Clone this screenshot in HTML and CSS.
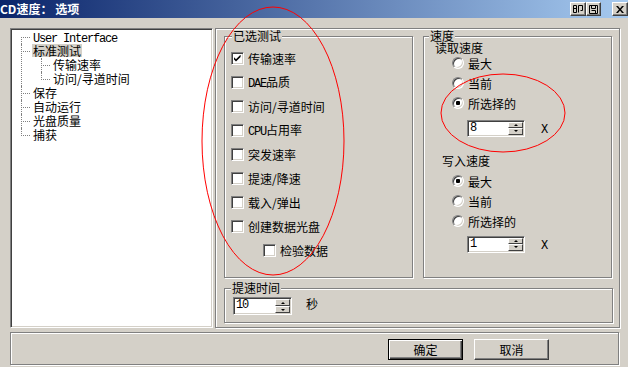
FILE: index.html
```html
<!DOCTYPE html>
<html lang="zh">
<head>
<meta charset="utf-8">
<title>CD速度： 选项</title>
<link rel="stylesheet" href="styles.css">
</head>
<body>
<div class="titlebar">
  <span class="title">CD速度： 选项</span>
  <span class="tbtn tbtn-a"><svg width="10" height="8" viewBox="0 0 10 8"><path d="M0.5 0.5h3v7h-3z M0.5 3.5h3 M5.5 0.5h4v5h-2 M5.5 0.5v7" fill="none" stroke="#000"/></svg></span>
  <span class="tbtn tbtn-b"><svg width="9" height="9" viewBox="0 0 9 9"><path d="M0.5 0.5h8v8h-8z M2.5 0.5v3h4v-3 M2.5 5.5h4v3" fill="none" stroke="#000"/></svg></span>
  <span class="tbtn tbtn-close"><svg width="8" height="7" viewBox="0 0 8 7"><path d="M0 0h2l2 2.5 2-2.5h2l-3 3.5 3 3.5h-2l-2-2.5-2 2.5h-2l3-3.5z" fill="#000"/></svg></span>
</div>

<div class="main">
  <div class="tree">
    <ul class="tree-root">
      <li class="first"><div class="lbl"><span class="lat">User Interface</span></div></li>
      <li><div class="lbl"><span class="sel">标准测试</span></div>
        <ul class="tree-sub">
          <li><div class="lbl">传输速率</div></li>
          <li class="last"><div class="lbl">访问/寻道时间</div></li>
        </ul>
      </li>
      <li><div class="lbl">保存</div></li>
      <li><div class="lbl">自动运行</div></li>
      <li><div class="lbl">光盘质量</div></li>
      <li class="last"><div class="lbl">捕获</div></li>
    </ul>
  </div>

  <div class="panel">
    <div class="toprow">
      <fieldset class="group g-tests">
        <legend>已选测试</legend>
        <div class="tests">
          <div class="crow"><span class="cbox"><svg width="7" height="7" viewBox="0 0 7 7"><path d="M0 2.2l2 2 4.6-4.6v2.4l-4.6 4.6-2-2z" fill="#000"/></svg></span><span>传输速率</span></div>
          <div class="crow"><span class="cbox"></span><span><span class="lat">DAE</span>品质</span></div>
          <div class="crow"><span class="cbox"></span><span>访问/寻道时间</span></div>
          <div class="crow"><span class="cbox"></span><span><span class="lat">CPU</span>占用率</span></div>
          <div class="crow"><span class="cbox"></span><span>突发速率</span></div>
          <div class="crow"><span class="cbox"></span><span>提速/降速</span></div>
          <div class="crow"><span class="cbox"></span><span>载入/弹出</span></div>
          <div class="crow"><span class="cbox"></span><span>创建数据光盘</span></div>
          <div class="crow crow-sub"><span class="cbox"></span><span>检验数据</span></div>
        </div>
      </fieldset>

      <fieldset class="group g-speed">
        <legend>速度</legend>
        <div class="sp-h sp-read">读取速度</div>
        <div class="radios">
          <div class="rrow"><span class="radio"></span><span>最大</span></div>
          <div class="rrow"><span class="radio"></span><span>当前</span></div>
          <div class="rrow"><span class="radio"><span class="dot"></span></span><span>所选择的</span></div>
        </div>
        <div class="spinrow sr-read">
          <div class="spin"><span class="spin-val lat">8</span><span class="spin-btns"><span class="sb"><i class="up"></i></span><span class="sb"><i class="dn"></i></span></span></div>
          <span class="xlab lat">X</span>
        </div>
        <div class="sp-h sp-write">写入速度</div>
        <div class="radios radios-write">
          <div class="rrow"><span class="radio"><span class="dot"></span></span><span>最大</span></div>
          <div class="rrow"><span class="radio"></span><span>当前</span></div>
          <div class="rrow"><span class="radio"></span><span>所选择的</span></div>
        </div>
        <div class="spinrow sr-write">
          <div class="spin"><span class="spin-val lat">1</span><span class="spin-btns"><span class="sb"><i class="up"></i></span><span class="sb"><i class="dn"></i></span></span></div>
          <span class="xlab lat">X</span>
        </div>
      </fieldset>
    </div>

    <fieldset class="group g-time">
      <legend>提速时间</legend>
      <div class="timerow">
        <div class="spin spin-time"><span class="spin-val lat">10</span><span class="spin-btns"><span class="sb"><i class="up"></i></span><span class="sb"><i class="dn"></i></span></span></div>
        <span class="sec">秒</span>
      </div>
    </fieldset>
  </div>
</div>

<div class="bottom">
  <button class="btn btn-default">确定</button>
  <button class="btn">取消</button>
</div>

<svg class="marks" width="628" height="367" viewBox="0 0 628 367">
  <ellipse cx="273" cy="141" rx="71" ry="134" fill="none" stroke="#f00" stroke-width="1"/>
  <ellipse cx="503" cy="113" rx="62" ry="39" fill="none" stroke="#f00" stroke-width="1"/>
</svg>
</body>
</html>
```

FILE: styles.css
```css
* { box-sizing: border-box; }

html, body {
  margin: 0;
  padding: 0;
}

body {
  position: relative;
  width: 628px;
  height: 367px;
  overflow: hidden;
  background: #d4d0c8;
  font-family: "Noto Sans CJK SC", "Liberation Sans", sans-serif;
  font-size: 12px;
  color: #000;
}

.lat {
  font-family: "Liberation Mono", monospace;
  font-size: 12px;
  letter-spacing: -1.2px;
}

/* title bar */
.titlebar {
  height: 18px;
  display: flex;
  align-items: center;
  background: linear-gradient(to right, #0a246a, #a6caf0);
}

.title {
  color: #fff;
  font-weight: bold;
  font-size: 12px;
  line-height: 18px;
  margin-right: auto;
}

.tbtn {
  height: 14px;
  display: flex;
  align-items: center;
  justify-content: center;
  background: #d4d0c8;
  border: 1px solid;
  border-color: #fff #404040 #404040 #fff;
  box-shadow: inset -1px -1px 0 #808080;
}

.tbtn-a { width: 16px; }
.tbtn-b { width: 15px; margin-right: 11px; }
.tbtn-close { width: 16px; }

/* main area */
.main {
  display: flex;
  gap: 2px;
  padding: 10px 0 0 10px;
}

.tree {
  width: 203px;
  height: 300px;
  background: #fff;
  border: 1px solid;
  border-color: #808080 #fff #fff #808080;
  box-shadow: inset 1px 1px 0 #404040, inset -1px -1px 0 #d4d0c8;
  padding: 1px 1px 1px 1px;
}

.tree ul {
  list-style: none;
  margin: 0;
  padding: 0;
}

.tree li {
  position: relative;
  white-space: nowrap;
}

.tree .lbl {
  height: 14px;
  line-height: 14px;
}

.tree-root > li { padding-left: 21px; }
.tree-sub > li { padding-left: 20px; }

.tree li::before {
  content: "";
  position: absolute;
  top: 7px;
  width: 9px;
  border-top: 1px dotted #808080;
}

.tree li::after {
  content: "";
  position: absolute;
  top: 0;
  bottom: 0;
  border-left: 1px dotted #808080;
}

.tree-root > li::before,
.tree-root > li::after { left: 9px; }
.tree-sub > li::before,
.tree-sub > li::after { left: 8px; }

.tree-root > li.first::after { top: 7px; }
.tree li.last::after { bottom: auto; height: 8px; }

.tree .sel {
  display: inline-block;
  vertical-align: top;
  height: 13px;
  line-height: 13px;
  padding: 0 1px;
  margin-left: -1px;
  background: #d4d0c8;
}

/* right panel */
.panel {
  width: 405px;
  height: 300px;
  border: 1px solid #808080;
  box-shadow: 1px 1px 0 #fff, inset 1px 1px 0 #fff;
  padding: 1px 0 0 8px;
}

.toprow {
  display: flex;
  gap: 10px;
  height: 248px;
}

.group {
  margin: 0;
  padding: 0;
  min-width: 0;
  border: 1px solid #808080;
  box-shadow: 1px 1px 0 #fff, inset 1px 1px 0 #fff;
}

.group legend {
  height: 12px;
  line-height: 12px;
  padding: 0 1px;
  background: #d4d0c8;
  font-size: 12px;
}

.g-tests { width: 189px; }
.g-tests legend { margin-left: 7px; }

.g-speed { width: 189px; }
.g-speed legend { margin-left: 5px; }

.g-time {
  width: 389px;
  height: 41px;
  margin-top: 4px;
}
.g-time legend { margin-left: 6px; }

/* tests list */
.tests { padding-top: 4px; }

.crow {
  height: 24px;
  display: flex;
  align-items: center;
  gap: 4px;
  padding-left: 6px;
  white-space: nowrap;
}

.crow-sub { padding-left: 38px; }

.cbox {
  width: 13px;
  height: 13px;
  flex: none;
  display: flex;
  align-items: center;
  justify-content: center;
  background: #fff;
  border: 1px solid;
  border-color: #808080 #fff #fff #808080;
  box-shadow: inset 1px 1px 0 #404040, inset -1px -1px 0 #d4d0c8;
}

/* speed group */
.sp-h {
  height: 11px;
  line-height: 12px;
  white-space: nowrap;
}
.sp-read { margin-left: 11px; }
.sp-write { margin-left: 18px; margin-top: 18px; }

.radios { padding-left: 28px; }
.radios-write { margin-top: 5px; }

.rrow {
  height: 20px;
  display: flex;
  align-items: center;
  gap: 4px;
}

.radio {
  width: 12px;
  height: 12px;
  flex: none;
  border-radius: 50%;
  background: #fff;
  border: 1px solid;
  border-color: #808080 #fff #fff #808080;
  box-shadow: inset 1px 1px 0 #404040, inset -1px -1px 0 #d4d0c8;
  display: flex;
  align-items: center;
  justify-content: center;
}

.dot {
  width: 4px;
  height: 4px;
  border-radius: 1px;
  background: #000;
}

.spinrow {
  display: flex;
  align-items: center;
  margin-left: 43px;
}
.sr-read { margin-top: 6px; }
.sr-write { margin-top: 4px; }

.spin {
  width: 58px;
  height: 17px;
  display: flex;
  flex: none;
  background: #fff;
  border: 1px solid;
  border-color: #808080 #fff #fff #808080;
  box-shadow: inset 1px 1px 0 #404040, inset -1px -1px 0 #d4d0c8;
  padding: 1px;
}

.spin-time {
  width: 59px;
  height: 18px;
}

.spin-val {
  flex: 1;
  line-height: 13px;
  padding-left: 1px;
}

.spin-btns {
  width: 15px;
  display: flex;
  flex-direction: column;
}

.sb {
  flex: 1;
  display: flex;
  align-items: center;
  justify-content: center;
  background: #d4d0c8;
  border: 1px solid;
  border-color: #fff #404040 #404040 #fff;
}

.sb i {
  width: 0;
  height: 0;
  border-left: 2px solid transparent;
  border-right: 2px solid transparent;
}
.sb .up { border-bottom: 2px solid #000; }
.sb .dn { border-top: 2px solid #000; }

.xlab {
  margin-left: 16px;
  margin-top: 4px;
}

/* time group */
.timerow {
  display: flex;
  align-items: center;
  gap: 14px;
  padding: 3px 0 0 8px;
}

.sec { line-height: 14px; margin-top: -4px; }

/* bottom bar */
.bottom {
  width: 609px;
  height: 33px;
  margin: 4px 0 0 10px;
  display: flex;
  justify-content: flex-end;
  align-items: flex-start;
  gap: 11px;
  padding: 6px 69px 0 0;
  border: 1px solid #808080;
  box-shadow: 1px 1px 0 #fff, inset 1px 1px 0 #fff;
}

.btn {
  width: 75px;
  height: 21px;
  margin: 0;
  padding: 0;
  font-family: "Noto Sans CJK SC", sans-serif;
  font-size: 12px;
  line-height: 17px;
  color: #000;
  background: #d4d0c8;
  border: 1px solid;
  border-color: #fff #404040 #404040 #fff;
  box-shadow: inset -1px -1px 0 #808080;
}

.btn-default {
  border-color: #000;
  box-shadow: inset 1px 1px 0 #fff, inset -1px -1px 0 #404040, inset -2px -2px 0 #808080;
}

/* red annotations */
.marks {
  position: absolute;
  left: 0;
  top: 0;
  pointer-events: none;
}
```
